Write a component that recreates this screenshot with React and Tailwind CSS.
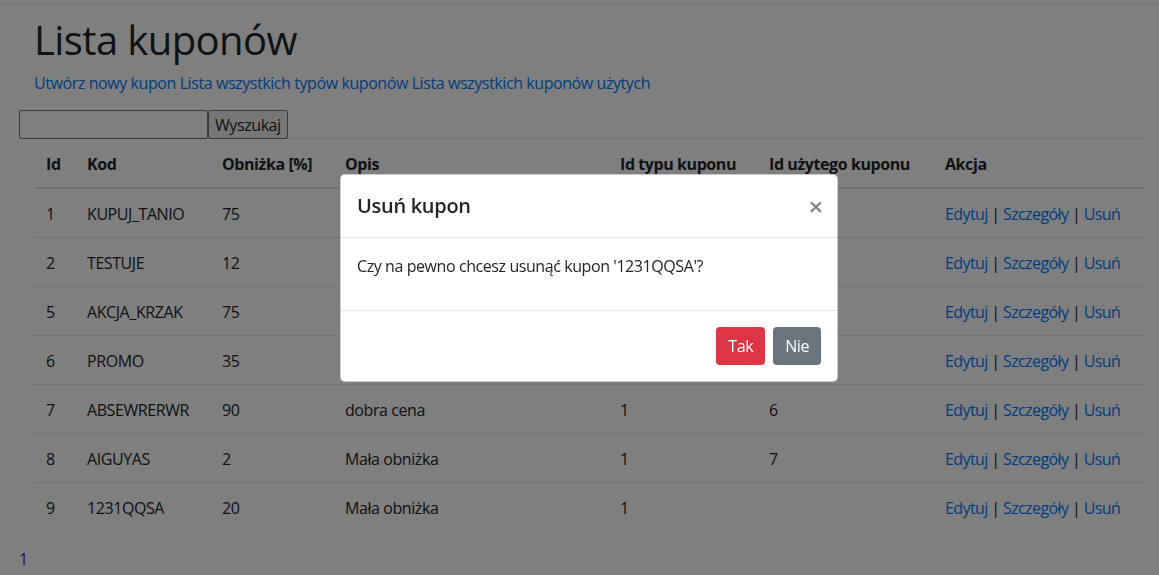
import React from 'react';

const rows = [
  { id: 1, kod: 'KUPUJ_TANIO', obn: 75, opis: '', typ: '', uzyty: '' },
  { id: 2, kod: 'TESTUJE', obn: 12, opis: '', typ: '', uzyty: '' },
  { id: 5, kod: 'AKCJA_KRZAK', obn: 75, opis: '', typ: '', uzyty: '' },
  { id: 6, kod: 'PROMO', obn: 35, opis: '', typ: '', uzyty: '' },
  { id: 7, kod: 'ABSEWRERWR', obn: 90, opis: 'dobra cena', typ: 1, uzyty: 6 },
  { id: 8, kod: 'AIGUYAS', obn: 2, opis: 'Mała obniżka', typ: 1, uzyty: 7 },
  { id: 9, kod: '1231QQSA', obn: 20, opis: 'Mała obniżka', typ: 1, uzyty: '' },
];

const font = { fontFamily: '"Open Sans", "Noto Sans", sans-serif' };

export default function App() {
  return (
    <div className="relative min-h-[575px] bg-white text-[#212529] text-[16px] leading-6 tracking-[-0.42px]" style={font}>
      <div className="h-[4px] border-b border-[#e5e5e5]"></div>

      <div className="pl-[19px]">
        <div className="px-[15px]">
          <h1 className="mt-[12px] mb-[7px] text-[40px] leading-[48px] font-normal tracking-[-0.6px]">Lista kuponów</h1>
          <p className="mb-[15px] text-[#007bff]">
            <a href="#">Utwórz nowy kupon</a> <a href="#">Lista wszystkich typów kuponów</a>{' '}
            <a href="#">Lista wszystkich kuponów użytych</a>
          </p>
        </div>

        <div className="flex -mb-px">
          <input className="w-[189px] h-[29px] border border-[#767676] rounded-[2px] bg-white" />
          <button className="h-[29px] px-[6px] border border-[#767676] rounded-[2px] bg-[#efefef] leading-5">Wyszukaj</button>
        </div>

        <div className="px-[15px]">
          <table className="w-full border-collapse mb-[16px]">
            <thead>
              <tr className="text-left">
                <th className="w-[41px] px-3 pt-[13px] pb-[11px] border-t border-b-2 border-[#dee2e6] font-bold">Id</th>
                <th className="w-[135px] px-3 pt-[13px] pb-[11px] border-t border-b-2 border-[#dee2e6] font-bold">Kod</th>
                <th className="w-[123px] px-3 pt-[13px] pb-[11px] border-t border-b-2 border-[#dee2e6] font-bold">Obniżka [%]</th>
                <th className="w-[275px] px-3 pt-[13px] pb-[11px] border-t border-b-2 border-[#dee2e6] font-bold">Opis</th>
                <th className="w-[149px] px-3 pt-[13px] pb-[11px] border-t border-b-2 border-[#dee2e6] font-bold">Id typu kuponu</th>
                <th className="w-[176px] px-3 pt-[13px] pb-[11px] border-t border-b-2 border-[#dee2e6] font-bold">Id użytego kuponu</th>
                <th className="px-3 pt-[13px] pb-[11px] border-t border-b-2 border-[#dee2e6] font-bold">Akcja</th>
              </tr>
            </thead>
            <tbody>
              {rows.map((r) => (
                <tr key={r.id}>
                  <td className="px-3 pt-[13px] pb-[11px] border-t border-[#dee2e6]">{r.id}</td>
                  <td className="px-3 pt-[13px] pb-[11px] border-t border-[#dee2e6]">{r.kod}</td>
                  <td className="px-3 pt-[13px] pb-[11px] border-t border-[#dee2e6]">{r.obn}</td>
                  <td className="px-3 pt-[13px] pb-[11px] border-t border-[#dee2e6]">{r.opis}</td>
                  <td className="px-3 pt-[13px] pb-[11px] border-t border-[#dee2e6]">{r.typ}</td>
                  <td className="px-3 pt-[13px] pb-[11px] border-t border-[#dee2e6]">{r.uzyty}</td>
                  <td className="px-3 pt-[13px] pb-[11px] border-t border-[#dee2e6] whitespace-nowrap tracking-[-0.6px]">
                    <a href="#" className="text-[#007bff]">Edytuj</a> | <a href="#" className="text-[#007bff]">Szczegóły</a> |{' '}
                    <a href="#" className="text-[#007bff]">Usuń</a>
                  </td>
                </tr>
              ))}
            </tbody>
          </table>
        </div>

        <div className="text-[#3b1f8a]">1</div>
      </div>

      {/* modal backdrop */}
      <div className="fixed inset-0 bg-black/50"></div>

      <div className="absolute left-[340px] top-[174px] w-[498px] bg-white rounded-[5px] border border-black/20">
        <div className="flex items-start justify-between p-4 border-b border-[#dee2e6]">
          <h5 className="text-[20px] leading-[30px] font-semibold tracking-[-0.3px]">Usuń kupon</h5>
          <button className="text-[26px] leading-[30px] font-semibold text-black/50 -mr-[2px]">×</button>
        </div>
        <div className="p-4">
          <p className="mb-4">Czy na pewno chcesz usunąć kupon '1231QQSA'?</p>
        </div>
        <div className="flex justify-end items-center p-3 border-t border-[#dee2e6]">
          <button className="m-1 h-[38px] px-3 rounded-[4px] bg-[#dc3545] text-white">Tak</button>
          <button className="m-1 h-[38px] px-3 rounded-[4px] bg-[#6c757d] text-white">Nie</button>
        </div>
      </div>
    </div>
  );
}
